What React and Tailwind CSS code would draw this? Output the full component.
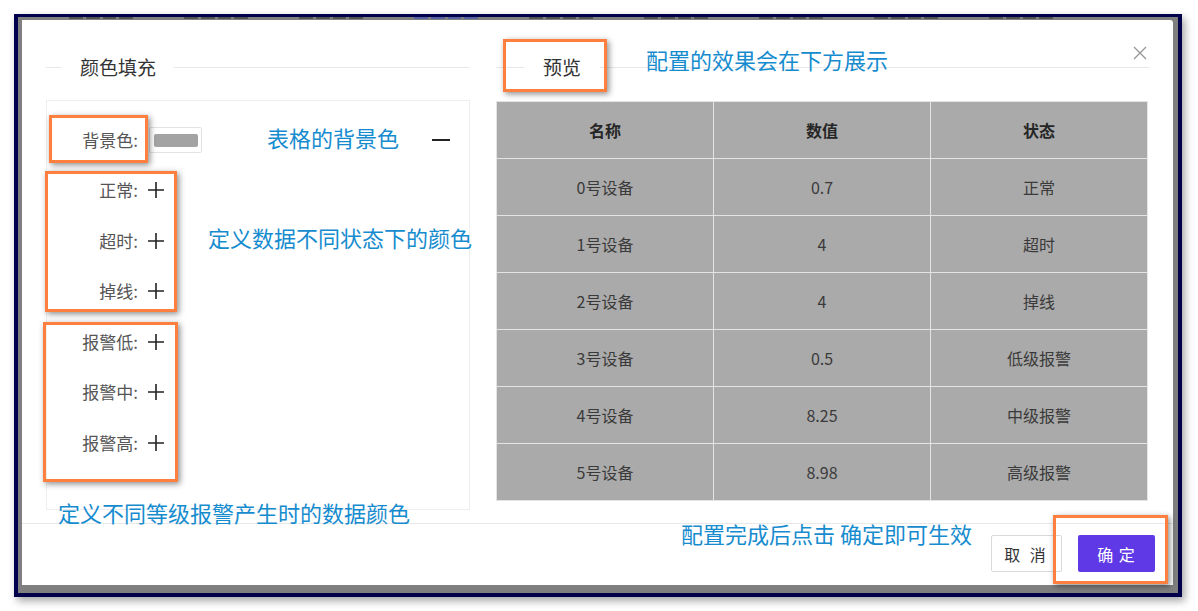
import React from 'react';

const rows = [
  { name: '0号设备', value: '0.7', state: '正常' },
  { name: '1号设备', value: '4', state: '超时' },
  { name: '2号设备', value: '4', state: '掉线' },
  { name: '3号设备', value: '0.5', state: '低级报警' },
  { name: '4号设备', value: '8.25', state: '中级报警' },
  { name: '5号设备', value: '8.98', state: '高级报警' },
];

const colorRows = ['正常', '超时', '掉线', '报警低', '报警中', '报警高'];

// page behind the mask: only the bottom edge of its tabs shows, drawn as bars
const hiddenTabs = [0, 1, 2, 3, 4, 5, 6, 7, 8];

const Plus = () => (
  <svg width="16" height="16" viewBox="0 0 16 16" className="shrink-0">
    <path d="M8 0v16M0 8h16" stroke="#222" strokeWidth="1.6" fill="none" />
  </svg>
);

const Close = () => (
  <svg width="14" height="14" viewBox="0 0 14 14">
    <path d="M1 1l12 12M13 1L1 13" stroke="#999" strokeWidth="1.4" fill="none" />
  </svg>
);

const Note = ({ className, children }) => (
  <div className={`absolute text-[22px] leading-[22px] text-[#168ccf] whitespace-nowrap ${className}`}>
    {children}
  </div>
);

const Mark = ({ className }) => (
  <div className={`absolute border-[3px] border-[#ff7f3f] shadow-[2px_2px_6px_rgba(0,0,0,0.45)] ${className}`} />
);

export default function App() {
  return (
    <div className="relative w-[1198px] h-[611px] bg-white overflow-hidden pl-[14px] pt-[14px] font-['Noto_Sans_CJK_SC',sans-serif]">
      {/* screenshot frame */}
      <div className="w-[1168px] h-[583px] border-4 border-t-[3px] border-[#02004a] bg-[#7f7f7f] shadow-[3px_4px_8px_rgba(0,0,0,0.35)] flex flex-col">
        <div className="h-[3px] flex items-start pl-[51px] gap-[51px] shrink-0">
          {hiddenTabs.map((i) => (
            <div key={i} className="w-[64px] h-[2px] flex justify-between gap-[3px]">
              <div className={`flex-1 h-[2px] ${i === 3 ? 'bg-[#55609f]' : 'bg-[#505050]'}`} />
              <div className={`flex-1 h-[2px] ${i === 3 ? 'bg-[#55609f]' : 'bg-[#505050]'}`} />
              <div className={`flex-1 h-[2px] ${i === 3 ? 'bg-[#55609f]' : 'bg-[#505050]'}`} />
              <div className={`flex-1 h-[2px] ${i === 3 ? 'bg-[#55609f]' : 'bg-[#505050]'}`} />
            </div>
          ))}
        </div>
        <div className="flex-1 pl-[4px] pr-[5px] pb-[8px]">
          {/* modal */}
          <div className="relative w-[1151px] h-[565px] bg-white rounded-tr-[3px] flex flex-col">
            <div className="absolute top-[26px] right-[26px]">
              <Close />
            </div>
            <div className="h-[503px] pt-[27px] pl-[24px] pr-[25px] flex gap-[26px]">
              {/* left column */}
              <div className="w-[424px] flex flex-col">
                <div className="h-[40px] flex items-center">
                  <div className="w-[16px] h-px bg-[#e8e8e8]" />
                  <span className="mx-[18px] text-[19px] leading-[20px] text-[#333]">颜色填充</span>
                  <div className="flex-1 h-px bg-[#e8e8e8]" />
                </div>
                <div className="mt-[13px] h-[410px] border border-[#eeeeee] pt-[14px] text-[17px] text-[#555]">
                  <div className="h-[50px] flex items-center">
                    <span className="w-[91px] text-right leading-[20px]">背景色:</span>
                    <div className="ml-[11px] w-[53px] h-[26px] border border-[#e2e2e2] rounded-[2px] flex items-center justify-center">
                      <div className="w-[44px] h-[13px] bg-[#a3a3a3] rounded-[2px]" />
                    </div>
                    <div className="ml-auto mr-[19px] w-[18px] h-[2px] bg-[#222]" />
                  </div>
                  {colorRows.map((r) => (
                    <div key={r} className="h-[50.5px] flex items-center">
                      <span className="w-[91px] text-right leading-[20px]">{r}:</span>
                      <div className="ml-[10px]">
                        <Plus />
                      </div>
                    </div>
                  ))}
                </div>
              </div>
              {/* right column */}
              <div className="w-[652px] flex flex-col">
                <div className="h-[40px] flex items-center">
                  <div className="w-[28px] h-px bg-[#e8e8e8]" />
                  <span className="mx-[19px] text-[19px] leading-[20px] text-[#333]">预览</span>
                  <div className="flex-1 h-px bg-[#e8e8e8] -mr-[2px]" />
                </div>
                <table className="mt-[14px] w-full border-collapse bg-[#aaaaaa] text-[16px] text-[#3a3a3a]">
                  <thead>
                    <tr className="h-[57px]">
                      {['名称', '数值', '状态'].map((h) => (
                        <th key={h} className="border border-[#e4e4e4] font-bold text-[#262626] w-1/3">
                          {h}
                        </th>
                      ))}
                    </tr>
                  </thead>
                  <tbody>
                    {rows.map((r) => (
                      <tr key={r.name} className="h-[57px]">
                        <td className="border border-[#e4e4e4] text-center">{r.name}</td>
                        <td className="border border-[#e4e4e4] text-center">{r.value}</td>
                        <td className="border border-[#e4e4e4] text-center">{r.state}</td>
                      </tr>
                    ))}
                  </tbody>
                </table>
              </div>
            </div>
            {/* footer */}
            <div className="flex-1 border-t border-[#e8e8e8] flex items-center justify-end gap-4 pr-[18px] pb-[2px]">
              <button className="w-[71px] h-[37px] border border-[#d9d9d9] rounded-[2px] bg-white text-[16px] text-[#333] tracking-[3px]">
                取 消
              </button>
              <button className="w-[77px] h-[37px] rounded-[2px] bg-[#5f39e6] text-[16px] text-white tracking-[1px]">
                确 定
              </button>
            </div>
          </div>
        </div>
      </div>

      {/* annotations laid over the screenshot */}
      <Mark className="left-[49px] top-[115px] w-[99px] h-[48px]" />
      <Mark className="left-[45px] top-[171px] w-[132px] h-[141px]" />
      <Mark className="left-[43px] top-[322px] w-[135px] h-[160px]" />
      <Mark className="left-[503px] top-[39px] w-[104px] h-[53px]" />
      <Mark className="left-[1053px] top-[515px] w-[115px] h-[69px]" />

      <Note className="left-[646px] top-[48px]">配置的效果会在下方展示</Note>
      <Note className="left-[267px] top-[126px]">表格的背景色</Note>
      <Note className="left-[208px] top-[226px]">定义数据不同状态下的颜色</Note>
      <Note className="left-[58px] top-[501px]">定义不同等级报警产生时的数据颜色</Note>
      <Note className="left-[681px] top-[522px] text-[20.5px]">配置完成后点击 确定即可生效</Note>
    </div>
  );
}
